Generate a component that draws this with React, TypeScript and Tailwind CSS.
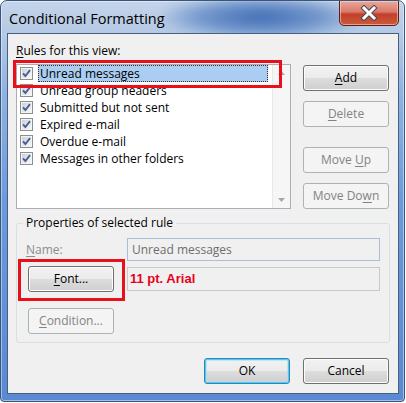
import React from "react";

const SANS = "[font-family:'Open_Sans','Noto_Sans',sans-serif]";

function U({ text, i }: { text: string; i: number }) {
  if (i < 0) return <>{text}</>;
  return (
    <>
      {text.slice(0, i)}
      <span className="underline underline-offset-[2px] decoration-1">{text[i]}</span>
      {text.slice(i + 1)}
    </>
  );
}

function Check() {
  return (
    <svg width="13" height="13" viewBox="0 0 13 13" className="shrink-0">
      <defs>
        <linearGradient id="cbg" x1="0" y1="0" x2="1" y2="1">
          <stop offset="0" stopColor="#cdd1d8" />
          <stop offset="1" stopColor="#f7f7f7" />
        </linearGradient>
      </defs>
      <rect x="0.5" y="0.5" width="12" height="12" fill="#f4f4f4" stroke="#8e8f8f" />
      <rect x="2" y="2" width="9" height="9" fill="url(#cbg)" />
      <path d="M3 6.3 L5.4 9 L10 3.2" fill="none" stroke="#4b5f96" strokeWidth="1.9" />
    </svg>
  );
}

type BtnProps = {
  text: string;
  u: number;
  disabled?: boolean;
  def?: boolean;
  className?: string;
};

function Btn({ text, u, disabled, def, className = "" }: BtnProps) {
  let cls =
    "w-[86px] h-[26px] rounded-[3px] border flex items-center justify-center text-[12px] leading-none shrink-0 ";
  if (disabled) {
    cls += "border-[#adb2b5] bg-[#f4f4f4] text-[#838383]";
  } else if (def) {
    cls +=
      "border-[#3c7fb1] bg-[linear-gradient(180deg,#f2f2f2_0%,#ebebeb_50%,#dddddd_50%,#cfcfcf_100%)] shadow-[inset_0_0_0_1px_#48cff7,inset_0_0_0_2px_rgba(160,225,250,0.6)] text-black";
  } else {
    cls +=
      "border-[#707070] bg-[linear-gradient(180deg,#f2f2f2_0%,#ebebeb_50%,#dddddd_50%,#cfcfcf_100%)] shadow-[inset_0_0_0_1px_#fcfcfc] text-black";
  }
  return (
    <div className={cls + " " + className}>
      <span>
        <U text={text} i={u} />
      </span>
    </div>
  );
}

const rules = [
  "Unread messages",
  "Unread group headers",
  "Submitted but not sent",
  "Expired e-mail",
  "Overdue e-mail",
  "Messages in other folders",
];

export default function App() {
  return (
    <div className={"w-[406px] h-[403px] bg-white " + SANS}>
      <div className="relative w-[405px] h-[402px] rounded-t-[7px] rounded-b-[4px] border border-[#3a557c] bg-[linear-gradient(180deg,#c4d4e9_0px,#b3c9e6_34px,#8fb3e2_90px,#6b9bdc_200px,#5889d2_402px)] shadow-[inset_0_0_0_1px_rgba(255,255,255,0.45)] flex flex-col pl-[6px] pr-[5px] pb-[7px] overflow-hidden">
        {/* blurred desktop behind glass */}
        <div className="absolute left-[160px] top-[-6px] w-[200px] h-[44px] rounded-full bg-[radial-gradient(ellipse_at_center,rgba(40,90,170,0.85)_0%,rgba(60,110,185,0.55)_45%,rgba(90,130,200,0)_75%)] blur-[5px]" />
        {/* title bar */}
        <div className="relative h-[32px] flex items-start shrink-0">
          <div className="pl-[2px] pt-[8px] text-[14.5px] leading-[20px] text-black">Conditional Formatting</div>
          <div className="ml-auto -mt-[1px] w-[60px] h-[26px] rounded-b-[5px] border border-[#5b1f17] bg-[linear-gradient(180deg,#e9a99b_0%,#d9796a_45%,#c2402b_55%,#cc5a3c_100%)] shadow-[inset_0_0_0_1px_rgba(255,220,210,0.55)] flex items-center justify-center">
            <svg width="18" height="16" viewBox="0 0 18 16">
              <path d="M4 3 L14 13 M14 3 L4 13" stroke="#4a4a55" strokeWidth="5" strokeLinecap="square" />
              <path d="M4 3 L14 13 M14 3 L4 13" stroke="#ffffff" strokeWidth="3" strokeLinecap="square" />
            </svg>
          </div>
        </div>
        {/* client area */}
        <div className="relative flex-1 border border-[#4a5f7e] bg-[#f0f0f0] flex flex-col pl-[8px] pr-[9px] text-[12px] text-black">
          <div className="mt-[9px] h-[16px] leading-[16px]">
            <U text="Rules for this view:" i={0} />
          </div>
          <div className="mt-[5px] flex gap-[12px]">
            <div className="w-[275px] h-[145px] border border-[#abadb3] bg-white flex">
              <div className="flex-1 flex flex-col">
                {rules.map((r, idx) => (
                  <div key={r} className="h-[17px] flex items-center pl-[3px]">
                    <Check />
                    <div
                      className={
                        "ml-[5px] flex-1 mr-[4px] h-[17px] leading-[15px] pl-[1px] border " +
                        (idx === 0 ? "bg-[#aacdf1] border-dotted border-[#333]" : "border-transparent")
                      }
                    >
                      {r}
                    </div>
                  </div>
                ))}
              </div>
              <div className="w-[18px] bg-[#f6f6f6] border-l border-[#e9e9e9] flex flex-col justify-between items-center py-[6px]">
                <svg width="7" height="4" viewBox="0 0 7 4"><path d="M0 4 L3.5 0 L7 4 Z" fill="#a8a8a8" /></svg>
                <svg width="7" height="4" viewBox="0 0 7 4"><path d="M0 0 L3.5 4 L7 0 Z" fill="#a8a8a8" /></svg>
              </div>
            </div>
            <div className="flex flex-col">
              <Btn text="Add" u={0} className="mt-[1px]" />
              <Btn text="Delete" u={0} disabled className="mt-[10px]" />
              <Btn text="Move Up" u={5} disabled className="mt-[20px]" />
              <Btn text="Move Down" u={7} disabled className="mt-[10px]" />
            </div>
          </div>
          {/* group box */}
          <div className="mt-[14px] w-[374px] border border-[#d5dfe5] rounded-[3px] flex flex-col pb-[8px]">
            <div className="-mt-[9px] ml-[6px] w-fit px-[3px] h-[16px] leading-[16px] bg-[#f0f0f0]">
              Properties of selected rule
            </div>
            <div className="mt-[7px] flex items-center">
              <div className="ml-[9px] w-[101px] text-[#8d8d8d]">
                <U text="Name:" i={0} />
              </div>
              <div className="w-[253px] h-[23px] border border-[#aebed2] bg-[#f0f0f0] text-[#6d6d6d] flex items-center pl-[4px]">
                Unread messages
              </div>
            </div>
            <div className="mt-[5px] flex items-center">
              <Btn text="Font..." u={0} className="ml-[11px]" />
              <div className="ml-[13px] w-[253px] h-[24px] border border-[#c8c8c8] bg-[#f0f0f0] flex items-center pl-[2px] text-[13px] font-bold text-[#e8001c] [font-family:'Liberation_Sans',Arial,sans-serif]">
                11 pt. Arial
              </div>
            </div>
            <div className="mt-[16px] flex">
              <Btn text="Condition..." u={0} disabled className="ml-[11px]" />
            </div>
          </div>
          <div className="mt-[15px] flex justify-end gap-[13px]">
            <Btn text="OK" u={-1} def />
            <Btn text="Cancel" u={-1} />
          </div>
          {/* red annotation boxes */}
          <div className="absolute left-[5px] top-[26px] w-[269px] h-[28px] border-[3px] border-[#e8101a]" />
          <div className="absolute left-[10px] top-[225px] w-[107px] h-[42px] border-[3px] border-[#e8101a]" />
        </div>
      </div>
    </div>
  );
}
